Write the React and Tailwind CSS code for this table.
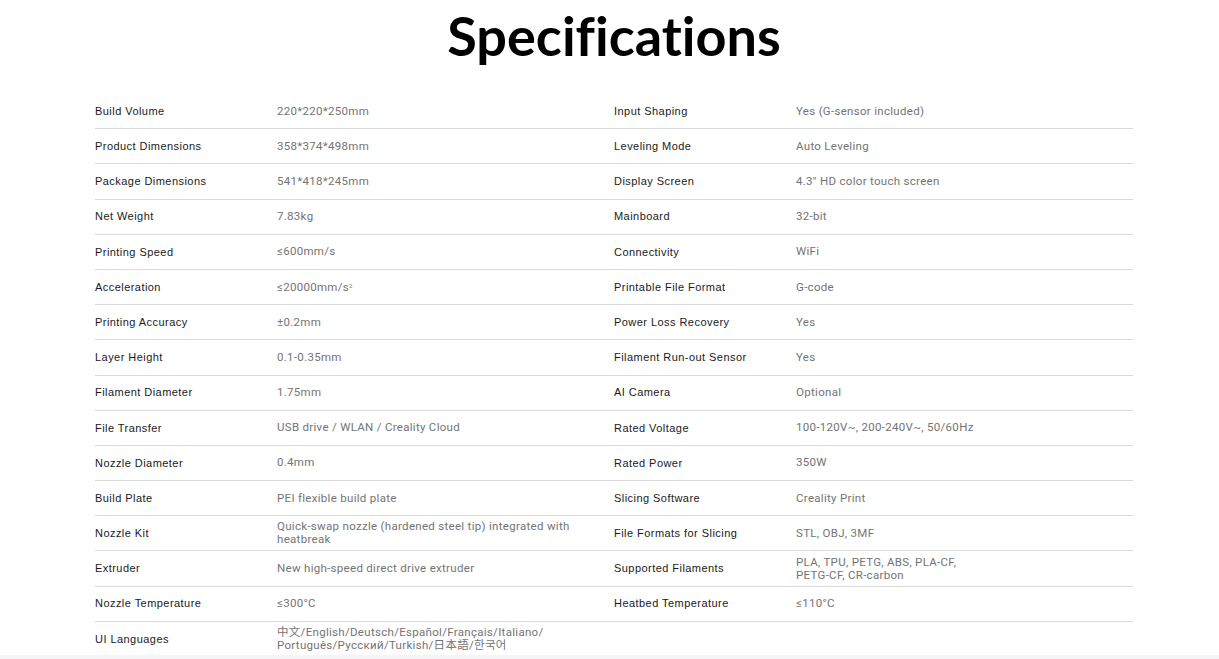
const left = [
  ['Build Volume', '220*220*250mm'],
  ['Product Dimensions', '358*374*498mm'],
  ['Package Dimensions', '541*418*245mm'],
  ['Net Weight', '7.83kg'],
  ['Printing Speed', '≤600mm/s'],
  ['Acceleration', <>≤20000mm/s<sup className="text-[6px]">2</sup></>],
  ['Printing Accuracy', '±0.2mm'],
  ['Layer Height', '0.1-0.35mm'],
  ['Filament Diameter', '1.75mm'],
  ['File Transfer', 'USB drive / WLAN / Creality Cloud'],
  ['Nozzle Diameter', '0.4mm'],
  ['Build Plate', 'PEI flexible build plate'],
  ['Nozzle Kit', <>Quick-swap nozzle (hardened steel tip) integrated with<br />heatbreak</>],
  ['Extruder', 'New high-speed direct drive extruder'],
  ['Nozzle Temperature', '≤300°C'],
  ['UI Languages', <>中文/English/Deutsch/Español/Français/Italiano/<br />Português/Русский/Turkish/日本語/한국어</>],
]

const right = [
  ['Input Shaping', 'Yes (G-sensor included)'],
  ['Leveling Mode', 'Auto Leveling'],
  ['Display Screen', '4.3" HD color touch screen'],
  ['Mainboard', '32-bit'],
  ['Connectivity', 'WiFi'],
  ['Printable File Format', 'G-code'],
  ['Power Loss Recovery', 'Yes'],
  ['Filament Run-out Sensor', 'Yes'],
  ['AI Camera', 'Optional'],
  ['Rated Voltage', '100-120V~, 200-240V~, 50/60Hz'],
  ['Rated Power', '350W'],
  ['Slicing Software', 'Creality Print'],
  ['File Formats for Slicing', 'STL, OBJ, 3MF'],
  ['Supported Filaments', <>PLA, TPU, PETG, ABS, PLA-CF,<br />PETG-CF, CR-carbon</>],
  ['Heatbed Temperature', '≤110°C'],
]

function Row({ label, value }) {
  return (
    <div className="flex h-[35.2px] items-center border-b border-[#d9d9d9]">
      <div className="w-[182px] shrink-0 font-['Liberation_Sans',Arial,sans-serif] text-[11px] tracking-[0.45px] text-[#1a1a1a]">
        {label}
      </div>
      <div className="font-['Roboto','Liberation_Sans','Noto_Sans_CJK_SC',sans-serif] text-[11.5px] leading-[13px] tracking-[0.3px] text-[#747474]">
        {value}
      </div>
    </div>
  )
}

export default function App() {
  return (
    <div className="min-h-screen bg-[#f5f5f7]">
      <div className="h-[655px] overflow-hidden bg-white">
        <div className="ml-[95px] w-[1038px]">
          <h1 className="pt-[4px] text-center font-['Lato',sans-serif] text-[54px] font-bold leading-[64px] text-black [font-variant-ligatures:none]">
            Specifications
          </h1>
          <div className="mt-[26px] grid grid-cols-2">
            <div>
              {left.map(([l, v]) => (
                <Row key={l} label={l} value={v} />
              ))}
            </div>
            <div>
              {right.map(([l, v]) => (
                <Row key={l} label={l} value={v} />
              ))}
            </div>
          </div>
        </div>
      </div>
    </div>
  )
}
